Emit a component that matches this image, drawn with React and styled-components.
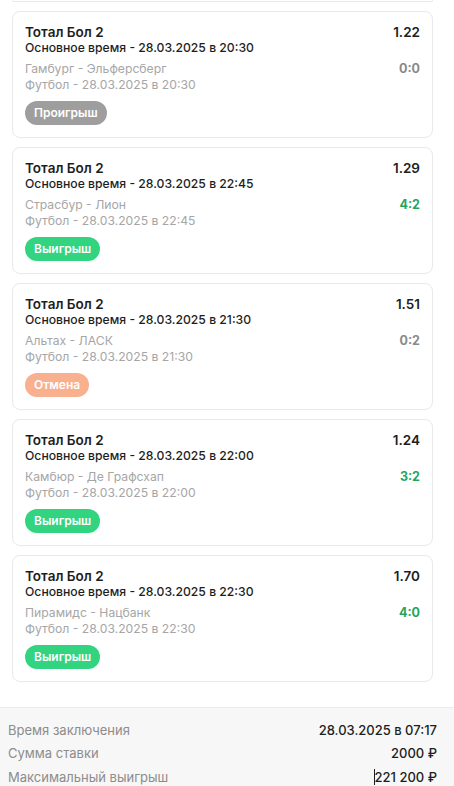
import React from 'react'
import styled, { createGlobalStyle } from 'styled-components'

const GlobalStyle = createGlobalStyle`
  html, body {
    margin: 0;
    padding: 0;
    background: #fff;
    font-family: Inter, "Noto Sans", sans-serif;
    -webkit-font-smoothing: antialiased;
  }
`

const bets = [
  { coef: '1.22', time: '20:30', teams: 'Гамбург - Эльферсберг', score: '0:0', status: 'lose' },
  { coef: '1.29', time: '22:45', teams: 'Страсбур - Лион', score: '4:2', status: 'win' },
  { coef: '1.51', time: '21:30', teams: 'Альтах - ЛАСК', score: '0:2', status: 'cancel' },
  { coef: '1.24', time: '22:00', teams: 'Камбюр - Де Графсхап', score: '3:2', status: 'win' },
  { coef: '1.70', time: '22:30', teams: 'Пирамидс - Нацбанк', score: '4:0', status: 'win' },
]

const statusText = { lose: 'Проигрыш', win: 'Выигрыш', cancel: 'Отмена' }
const statusColor = { lose: '#9e9e9e', win: '#33d47f', cancel: '#f8b08e' }

const App = () => {
  return (
    <Page>
      <GlobalStyle />
      <List>
        <CardTail />
        {bets.map((b, i) => (
          <Card key={i}>
            <Row>
              <Title>Тотал Бол 2</Title>
              <Coef>{b.coef}</Coef>
            </Row>
            <Sub>Основное время - 28.03.2025 в {b.time}</Sub>
            <Row $gap>
              <Muted>{b.teams}</Muted>
              <Score $win={b.status === 'win'}>{b.score}</Score>
            </Row>
            <Muted>Футбол - 28.03.2025 в {b.time}</Muted>
            <Badge $color={statusColor[b.status]}>{statusText[b.status]}</Badge>
          </Card>
        ))}
      </List>
      <Summary>
        <SumRow>
          <SumLabel>Время заключения</SumLabel>
          <SumValue>28.03.2025 в 07:17</SumValue>
        </SumRow>
        <SumRow>
          <SumLabel>Сумма ставки</SumLabel>
          <SumValue>2000 ₽</SumValue>
        </SumRow>
        <SumRow>
          <SumLabel>Максимальный выигрыш</SumLabel>
          <SumValue><Caret />221 200 ₽</SumValue>
        </SumRow>
      </Summary>
    </Page>
  )
}

export default App

const Page = styled.div`
  width: 454px;
  height: 786px;
  overflow: hidden;
  display: flex;
  flex-direction: column;
`

const List = styled.div`
  display: flex;
  flex-direction: column;
  gap: 9px;
  padding: 0 21px 0 12px;
`

const CardTail = styled.div`
  height: 1px;
  border: 1px solid #e9e9e9;
  border-top: none;
  border-radius: 0 0 8px 8px;
`

const Card = styled.div`
  border: 1px solid #e9e9e9;
  border-radius: 8px;
  padding: 12px 12px 12px 12px;
  display: flex;
  flex-direction: column;
  align-items: flex-start;
`

const Row = styled.div`
  width: 100%;
  display: flex;
  justify-content: space-between;
  align-items: center;
  margin-top: ${p => (p.$gap ? '5px' : '0')};
`

const Title = styled.div`
  font-size: 13.5px;
  line-height: 16px;
  font-weight: 600;
  color: #1e1e1e;
`

const Coef = styled.div`
  font-size: 13.5px;
  line-height: 16px;
  font-weight: 600;
  color: #1e1e1e;
`

const Sub = styled.div`
  font-size: 12.2px;
  line-height: 16px;
  font-weight: 500;
  color: #1e1e1e;
`

const Muted = styled.div`
  font-size: 12.2px;
  line-height: 16px;
  color: #a6a6a6;
`

const Score = styled.div`
  font-size: 12.5px;
  line-height: 16px;
  font-weight: 700;
  color: ${p => (p.$win ? '#1fa65c' : '#8a8a8a')};
`

const Badge = styled.div`
  margin-top: 8px;
  height: 24px;
  line-height: 24px;
  padding: 0 9px;
  border-radius: 12px;
  background: ${p => p.$color};
  color: #fff;
  font-size: 12px;
  font-weight: 600;
`

const Summary = styled.div`
  margin-top: 25px;
  flex: 1;
  background: #f7f7f7;
  border-top: 1px solid #ececec;
  padding: 10px 17px 0 8px;
  display: flex;
  flex-direction: column;
`

const SumRow = styled.div`
  display: flex;
  justify-content: space-between;
  align-items: center;
  height: 23.5px;
`

const SumLabel = styled.div`
  font-size: 13px;
  color: #8c8c8c;
`

const SumValue = styled.div`
  font-size: 13px;
  font-weight: 500;
  color: #1e1e1e;
  display: flex;
  align-items: center;
`

const Caret = styled.span`
  width: 1px;
  height: 16px;
  background: #1e1e1e;
  margin-right: 0;
`
